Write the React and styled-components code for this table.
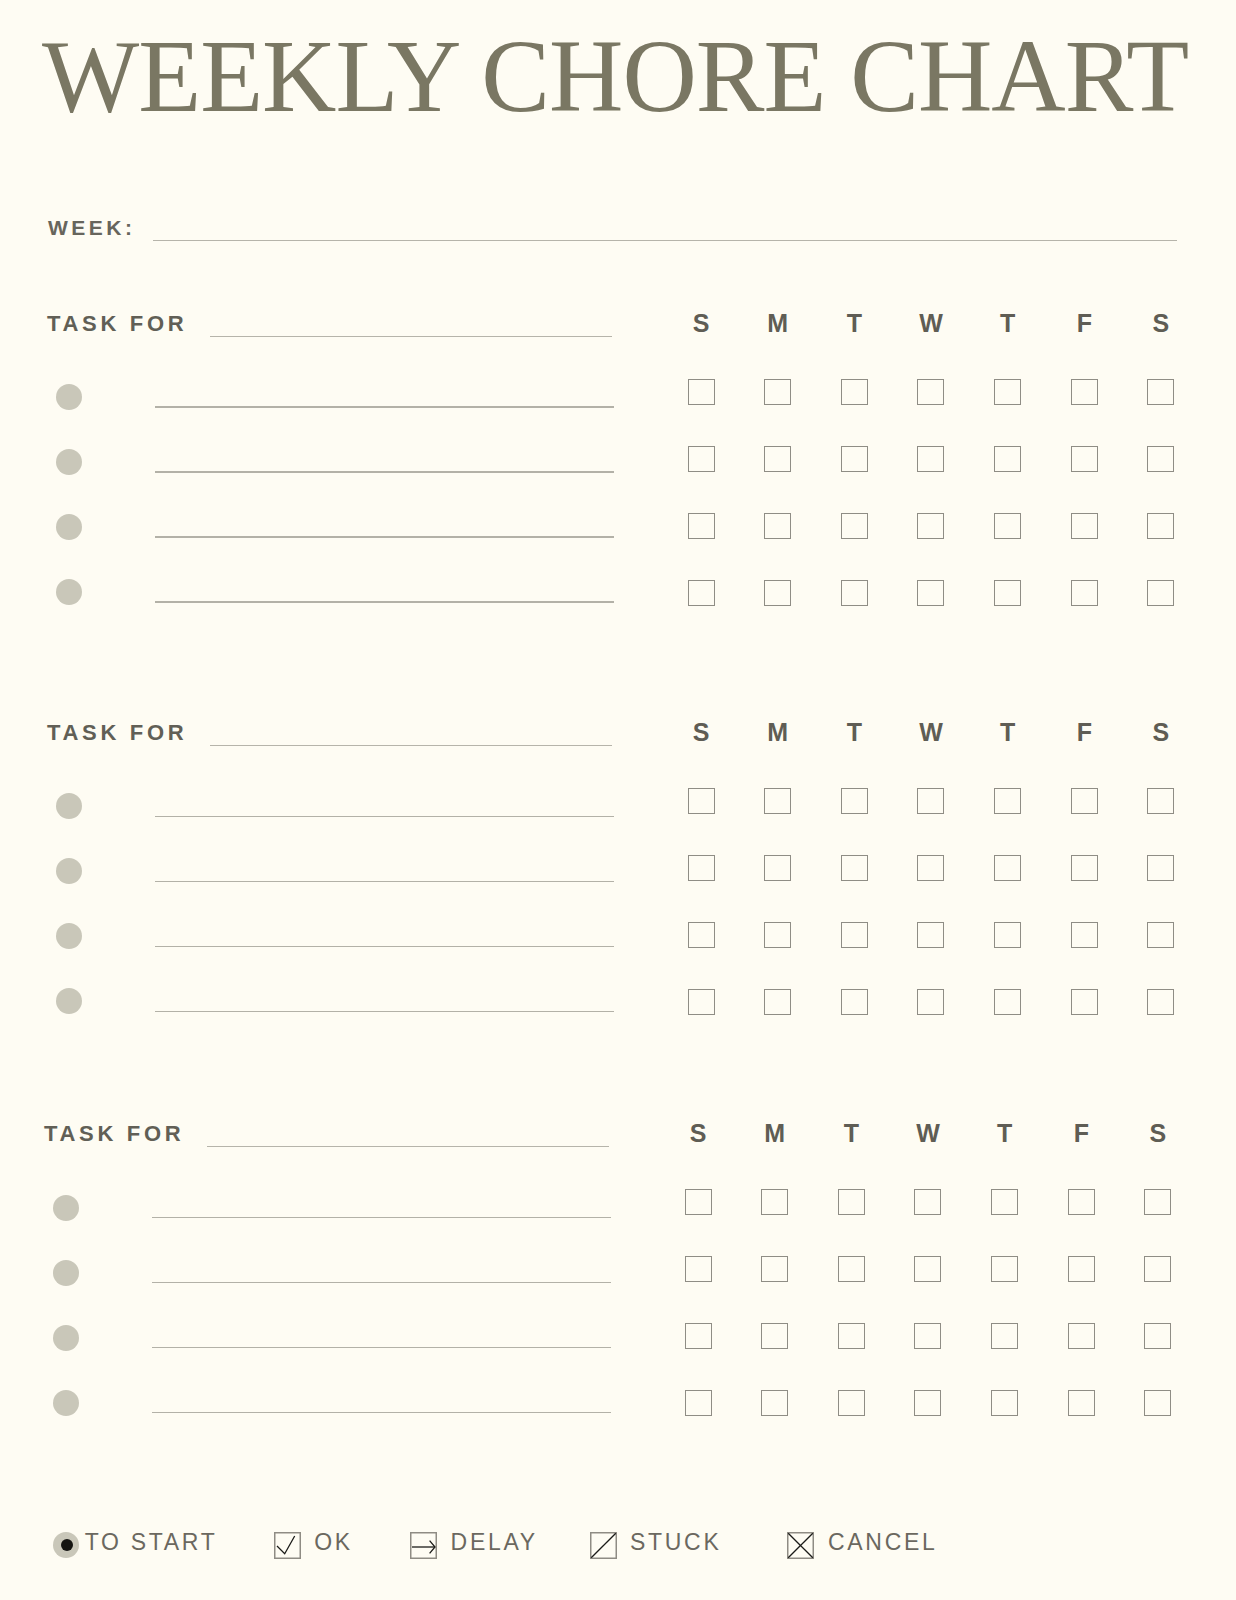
import styled, { createGlobalStyle } from "styled-components";

const GlobalStyle = createGlobalStyle`
  body {
    margin: 0;
    background: #fefcf3;
  }
`;

const DAYS = ["S", "M", "T", "W", "T", "F", "S"];
const SANS = `"Liberation Sans", Arial, sans-serif`;

const Page = styled.div`
  width: 1236px;
  min-height: 1600px;
  box-sizing: border-box;
  padding-top: 25px;
  background: #fefcf3;
  overflow: hidden;
`;

const Title = styled.h1`
  margin: 0 0 0 42px;
  font-family: "Liberation Serif", "Times New Roman", serif;
  font-weight: 400;
  font-size: 103px;
  line-height: 103px;
  letter-spacing: -1px;
  color: #7a7763;
  white-space: nowrap;
`;

const WeekRow = styled.div`
  margin: 86px 0 0 48px;
  font: 700 21px/28px ${SANS};
  letter-spacing: 3.5px;
  color: #67655c;
  white-space: nowrap;
`;

const Blank = styled.span`
  display: inline-block;
  width: ${(p) => p.$w}px;
  height: 0;
  margin-left: ${(p) => p.$gap}px;
  border-top: 1.5px solid #b6b4aa;
  vertical-align: -6px;
`;

const Section = styled.section`
  display: grid;
  grid-template-columns: 662.7px auto;
  align-items: start;
  margin-top: ${(p) => p.$top}px;
  margin-left: ${(p) => p.$shift || 0}px;
`;

const TaskColumn = styled.div``;

const TaskFor = styled.div`
  padding: 1px 0 0 47px;
  font: 700 22px/30px ${SANS};
  letter-spacing: 3.7px;
  color: #615f56;
  white-space: nowrap;
`;

const TaskList = styled.div`
  margin-top: 25.7px;
`;

const TaskRow = styled.div`
  display: flex;
  align-items: center;
  height: 65px;
`;

const Dot = styled.span`
  width: 26px;
  height: 26px;
  margin-left: 56px;
  border-radius: 50%;
  background: #c9c7b9;
  flex: none;
`;

const TaskLine = styled.span`
  width: 459px;
  height: 1.5px;
  margin: 20px 0 0 73px;
  background: #b3b1a7;
  flex: none;
`;

const DayGrid = styled.div`
  display: grid;
  grid-template-columns: repeat(7, 76.67px);
  grid-template-rows: 50.5px repeat(4, 67px);
  align-items: center;
  justify-items: center;
`;

const DayLabel = styled.div`
  align-self: start;
  font: 700 25px/30px ${SANS};
  color: #5f5d54;
`;

const CheckBox = styled.span`
  width: 27px;
  height: 26px;
  box-sizing: border-box;
  border: 1.5px solid #8f8d85;
`;

const Legend = styled.div`
  display: grid;
  grid-template-columns: 221.6px 135.3px 180.4px 197px auto;
  height: 30px;
  margin-top: 93.2px;
  padding-left: 52.7px;
  align-items: center;
`;

const LegendItem = styled.div`
  display: flex;
  align-items: center;
  gap: ${(p) => p.$gap}px;
`;

const LegendText = styled.span`
  margin-bottom: 6px;
  font: 400 23px/1 ${SANS};
  letter-spacing: 2.7px;
  color: #6b685f;
  white-space: nowrap;
`;

const Frame = () => (
  <rect x="0.75" y="0.75" width="25.5" height="25.5" fill="none" stroke="#8f8c84" strokeWidth="1.5" />
);

const icons = {
  start: (
    <svg width="26" height="26" viewBox="0 0 26 26">
      <circle cx="13" cy="13" r="13" fill="#c9c7b9" />
      <circle cx="14" cy="13" r="6" fill="#151512" />
    </svg>
  ),
  ok: (
    <svg width="27" height="27" viewBox="0 0 27 27">
      <Frame />
      <polyline points="3,14 10.7,21.7 20.7,4" fill="none" stroke="#1b1b18" strokeWidth="1.3" />
    </svg>
  ),
  delay: (
    <svg width="27" height="27" viewBox="0 0 27 27">
      <Frame />
      <line x1="2" y1="15" x2="25" y2="15" stroke="#1b1b18" strokeWidth="1.3" />
      <polyline points="19.6,8.6 25,15 19.6,21.4" fill="none" stroke="#1b1b18" strokeWidth="1.3" />
    </svg>
  ),
  stuck: (
    <svg width="27" height="27" viewBox="0 0 27 27">
      <Frame />
      <line x1="1.2" y1="25.8" x2="25.8" y2="1.2" stroke="#1b1b18" strokeWidth="1.3" />
    </svg>
  ),
  cancel: (
    <svg width="27" height="27" viewBox="0 0 27 27">
      <Frame />
      <line x1="1.2" y1="1.2" x2="25.8" y2="25.8" stroke="#1b1b18" strokeWidth="1.3" />
      <line x1="25.8" y1="1.2" x2="1.2" y2="25.8" stroke="#1b1b18" strokeWidth="1.3" />
    </svg>
  ),
};

const legend = [
  { key: "start", label: "TO START", gap: 6 },
  { key: "ok", label: "OK", gap: 13 },
  { key: "delay", label: "DELAY", gap: 14 },
  { key: "stuck", label: "STUCK", gap: 13 },
  { key: "cancel", label: "CANCEL", gap: 14 },
];

const sections = [
  { top: 66, shift: 0 },
  { top: 90.7, shift: 0 },
  { top: 82.7, shift: -3 },
];

function TaskSection({ top, shift }) {
  return (
    <Section $top={top} $shift={shift}>
      <TaskColumn>
        <TaskFor>
          TASK FOR
          <Blank $w={402} $gap={23} />
        </TaskFor>
        <TaskList>
          {[0, 1, 2, 3].map((r) => (
            <TaskRow key={r}>
              <Dot />
              <TaskLine />
            </TaskRow>
          ))}
        </TaskList>
      </TaskColumn>
      <DayGrid>
        {DAYS.map((d, i) => (
          <DayLabel key={"d" + i}>{d}</DayLabel>
        ))}
        {Array.from({ length: 28 }, (_, i) => (
          <CheckBox key={i} />
        ))}
      </DayGrid>
    </Section>
  );
}

export default function App() {
  return (
    <Page>
      <GlobalStyle />
      <Title>WEEKLY CHORE CHART</Title>
      <WeekRow>
        WEEK:
        <Blank $w={1024} $gap={17} />
      </WeekRow>
      {sections.map((s, i) => (
        <TaskSection key={i} top={s.top} shift={s.shift} />
      ))}
      <Legend>
        {legend.map((l) => (
          <LegendItem key={l.key} $gap={l.gap}>
            {icons[l.key]}
            <LegendText>{l.label}</LegendText>
          </LegendItem>
        ))}
      </Legend>
    </Page>
  );
}
